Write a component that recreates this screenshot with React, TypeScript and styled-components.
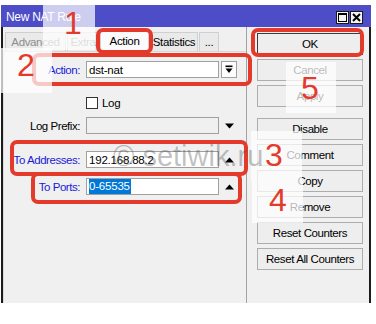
import React from "react";
import styled, { createGlobalStyle } from "styled-components";

const RED = "#e33a2c";
const BLUE_LABEL = "#1a1ad6";

const Global = createGlobalStyle`
  html, body { margin: 0; padding: 0; background: #ffffff; }
  body { font-family: "Liberation Sans", Arial, sans-serif; font-size: 11px; color: #000; }
  * { box-sizing: border-box; }
`;

const Stage = styled.div`
  position: relative;
  width: 376px;
  height: 324px;
  padding: 5px 0 0 1px;
  overflow: hidden;
  background: #fff;
`;

const Window = styled.div`
  width: 370px;
  display: flex;
  flex-direction: column;
`;

const TitleBar = styled.div`
  height: 22px;
  background: #4d4dc8;
  color: #fff;
  display: flex;
  align-items: center;
  padding: 0 8px 0 5px;
  font-size: 12px;
  letter-spacing: -0.3px;
`;

const TitleText = styled.span`
  flex: 1;
  margin-top: 1px;
`;

const TitleButtons = styled.div`
  display: flex;
  gap: 1px;
  align-self: flex-start;
  margin-top: 6px;
`;

const TitleButton = styled.div`
  width: 13px;
  height: 13px;
  background: #f4f4f4;
  border: 1px solid #1a1a1a;
  display: flex;
  align-items: center;
  justify-content: center;
`;

const Body = styled.div`
  height: 276px;
  display: flex;
  background: #f0f0f0;
  border-left: 2px solid #1c1c1c;
  border-right: 2px solid #1c1c1c;
`;

const LeftCol = styled.div`
  width: 244px;
  display: flex;
  flex-direction: column;
  border-right: 1px solid #a3a3a3;
`;

const TabStrip = styled.div`
  height: 24px;
  display: flex;
  align-items: flex-end;
  padding-left: 2px;
  gap: 1px;
`;

const Tab = styled.div<{ $w: number; $active?: boolean; $dim?: boolean }>`
  width: ${(p) => p.$w}px;
  height: ${(p) => (p.$active ? 21 : 19)}px;
  background: ${(p) => (p.$active ? "#fbfbfb" : "#eaeaea")};
  border: 1px solid #cfcfcf;
  border-bottom: none;
  display: flex;
  align-items: center;
  justify-content: center;
  font-size: 11.5px;
  letter-spacing: -0.35px;
  color: ${(p) => (p.$dim ? "#8d8d8d" : "#000")};
  padding-bottom: 1px;
`;

const TabPage = styled.div`
  flex: 1;
  border-top: 1px solid #d6d6d6;
  border-left: 1px solid #dadada;
  padding-top: 9px;
  display: flex;
  flex-direction: column;
`;

const Row = styled.div<{ $mt: number; $h?: number }>`
  display: flex;
  align-items: center;
  height: ${(p) => p.$h ?? 17}px;
  margin-top: ${(p) => p.$mt}px;
`;

const Label = styled.div<{ $color?: string }>`
  width: 76px;
  margin-right: 6px;
  text-align: right;
  white-space: nowrap;
  font-size: 11.5px;
  letter-spacing: -0.45px;
  color: ${(p) => p.$color ?? "#000"};
`;

const Field = styled.div<{ $disabled?: boolean }>`
  width: 133px;
  height: 17px;
  border: 1px solid #a0a0a0;
  background: ${(p) => (p.$disabled ? "#f0f0f0" : "#ffffff")};
  display: flex;
  align-items: center;
  padding-left: 2px;
  font-size: 11.5px;
  letter-spacing: -0.2px;
  white-space: nowrap;
`;

const Selected = styled.span`
  background: #0078d7;
  color: #fff;
  padding: 1px 1px 1px 0;
  line-height: 13px;
`;

const Side = styled.div`
  width: 16px;
  height: 17px;
  margin-left: 2px;
  display: flex;
  align-items: center;
  justify-content: center;
`;

const DropButton = styled(Side)`
  border: 1px solid #a0a0a0;
  background: #fdfdfd;
`;

const Spacer = styled.div`
  width: 82px;
`;

const Check = styled.div`
  width: 12px;
  height: 12px;
  border: 1px solid #333;
  background: #fff;
`;

const CheckText = styled.span`
  margin-left: 4px;
  font-size: 11.5px;
  letter-spacing: -0.3px;
`;

const RightCol = styled.div`
  flex: 1;
  padding: 6px 6px 0 10px;
  display: flex;
  flex-direction: column;
`;

const Button = styled.div<{ $mt?: number; $default?: boolean }>`
  height: 22px;
  margin-top: ${(p) => p.$mt ?? 4}px;
  border: 1px solid ${(p) => (p.$default ? "#3c3c3c" : "#adadad")};
  background: #eeeeee;
  display: flex;
  align-items: center;
  justify-content: center;
  font-size: 11.5px;
  letter-spacing: -0.4px;
  color: #000;
`;

const RedBox = styled.div<{ $x: number; $y: number; $w: number; $h: number }>`
  position: absolute;
  left: ${(p) => p.$x}px;
  top: ${(p) => p.$y}px;
  width: ${(p) => p.$w}px;
  height: ${(p) => p.$h}px;
  border: 4px solid ${RED};
  border-radius: 7px;
  pointer-events: none;
`;

const Veil = styled.div<{ $x: number; $y: number; $w: number; $h: number }>`
  position: absolute;
  left: ${(p) => p.$x}px;
  top: ${(p) => p.$y}px;
  width: ${(p) => p.$w}px;
  height: ${(p) => p.$h}px;
  background: rgba(255, 255, 255, 0.72);
`;

const Num = styled.div<{ $x: number; $y: number }>`
  position: absolute;
  left: ${(p) => p.$x}px;
  top: ${(p) => p.$y}px;
  font-family: "Liberation Sans", Arial, sans-serif;
  font-size: 32px;
  line-height: 31px;
  color: ${RED};
`;

const Watermark = styled.div`
  position: absolute;
  left: 113px;
  top: 142px;
  font-family: "Liberation Sans", Arial, sans-serif;
  font-size: 29px;
  line-height: 29px;
  color: rgba(90, 90, 90, 0.38);
  white-space: nowrap;
`;

const UpArrow = () => (
  <svg width="9" height="6" viewBox="0 0 9 6">
    <polygon points="0,5.5 9,5.5 4.5,0.5" fill="#000" />
  </svg>
);

const DownArrow = () => (
  <svg width="9" height="6" viewBox="0 0 9 6">
    <polygon points="0,0.5 9,0.5 4.5,5.5" fill="#000" />
  </svg>
);

const DropIcon = () => (
  <svg width="8" height="9" viewBox="0 0 8 9">
    <rect x="0.5" y="0.5" width="7" height="1.6" fill="#000" />
    <polygon points="0.5,3.5 7.5,3.5 4,8" fill="#000" />
  </svg>
);

export default function App() {
  return (
    <Stage>
      <Global />
      <Window>
        <TitleBar>
          <TitleText>New NAT Rule</TitleText>
          <TitleButtons>
            <TitleButton>
              <svg width="9" height="9" viewBox="0 0 9 9">
                <rect x="0.5" y="0.5" width="8" height="8" fill="none" stroke="#000" strokeWidth="1" />
                <rect x="0.5" y="0.5" width="8" height="1.5" fill="#000" />
              </svg>
            </TitleButton>
            <TitleButton>
              <svg width="9" height="9" viewBox="0 0 9 9">
                <path d="M1 1 L8 8 M8 1 L1 8" stroke="#000" strokeWidth="2" />
              </svg>
            </TitleButton>
          </TitleButtons>
        </TitleBar>
        <Body>
          <LeftCol>
            <TabStrip>
              <Tab $w={61} $dim>Advanced</Tab>
              <Tab $w={32} $dim>Extra</Tab>
              <Tab $w={49} $active>Action</Tab>
              <Tab $w={48}>Statistics</Tab>
              <Tab $w={20}>...</Tab>
            </TabStrip>
            <TabPage>
              <Row $mt={0}>
                <Label $color={BLUE_LABEL}>Action:</Label>
                <Field>dst-nat</Field>
                <DropButton>
                  <DropIcon />
                </DropButton>
              </Row>
              <Row $mt={18} $h={13}>
                <Spacer />
                <Check />
                <CheckText>Log</CheckText>
              </Row>
              <Row $mt={8}>
                <Label>Log Prefix:</Label>
                <Field $disabled />
                <Side>
                  <DownArrow />
                </Side>
              </Row>
              <Row $mt={17}>
                <Label $color={BLUE_LABEL}>To Addresses:</Label>
                <Field>192.168.88.2</Field>
                <Side>
                  <UpArrow />
                </Side>
              </Row>
              <Row $mt={10}>
                <Label $color={BLUE_LABEL}>To Ports:</Label>
                <Field>
                  <Selected>0-65535</Selected>
                </Field>
                <Side>
                  <UpArrow />
                </Side>
              </Row>
            </TabPage>
          </LeftCol>
          <RightCol>
            <Button $mt={0} $default>OK</Button>
            <Button>Cancel</Button>
            <Button>Apply</Button>
            <Button $mt={11}>Disable</Button>
            <Button>Comment</Button>
            <Button>Copy</Button>
            <Button>Remove</Button>
            <Button>Reset Counters</Button>
            <Button>Reset All Counters</Button>
          </RightCol>
        </Body>
      </Window>

      <RedBox $x={96} $y={28} $w={57} $h={26} />
      <RedBox $x={32} $y={53} $w={220} $h={33} />
      <RedBox $x={251} $y={28} $w={113} $h={29} />
      <RedBox $x={10} $y={140} $w={238} $h={36} />
      <RedBox $x={31} $y={172} $w={211} $h={32} />

      <Veil $x={43} $y={0} $w={52} $h={50} />
      <Veil $x={1} $y={48} $w={51} $h={45} />
      <Veil $x={286} $y={62} $w={50} $h={51} />
      <Veil $x={251} $y={131} $w={51} $h={50} />
      <Veil $x={252} $y={181} $w={51} $h={42} />

      <Num $x={64} $y={8}>1</Num>
      <Num $x={17} $y={50}>2</Num>
      <Num $x={301} $y={73}>5</Num>
      <Num $x={265} $y={140}>3</Num>
      <Num $x={269} $y={185}>4</Num>

      <Watermark>© setiwik.ru</Watermark>
    </Stage>
  );
}
